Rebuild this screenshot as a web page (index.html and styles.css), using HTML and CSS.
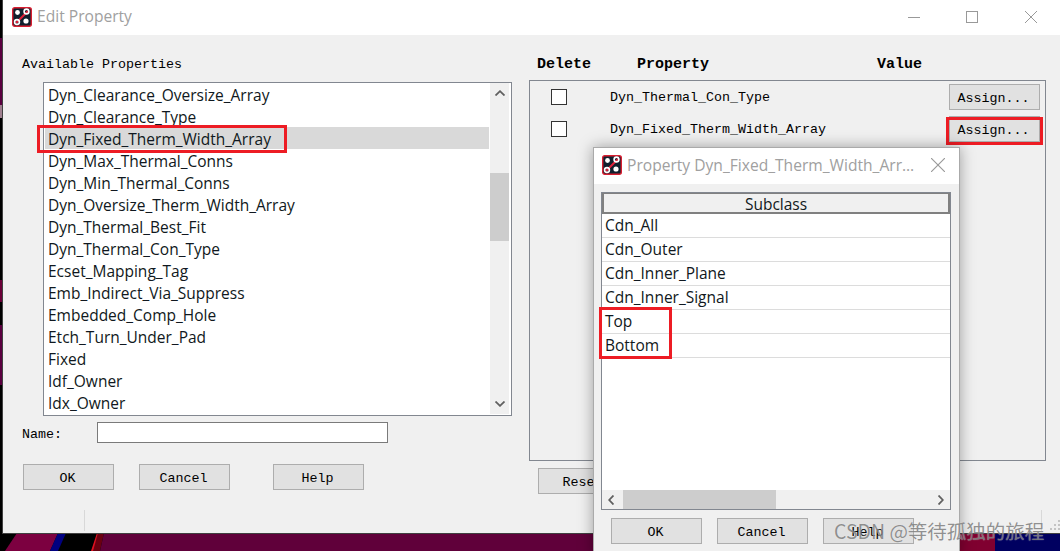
FILE: index.html
```html
<!DOCTYPE html>
<html lang="en">
<head>
<meta charset="utf-8">
<title>Edit Property</title>
<link rel="stylesheet" href="styles.css">
</head>
<body>
<div class="desktop">
  <svg class="wallpaper" width="1060" height="551" viewBox="0 0 1060 551" aria-hidden="true">
    <rect width="1060" height="551" fill="#000"/>
    <rect x="0" y="38" width="3" height="67" fill="#5a0040"/>
    <rect x="0" y="105" width="3" height="13" fill="#a08090"/>
    <rect x="0" y="280" width="3" height="22" fill="#6a0038"/>
    <rect x="0" y="325" width="3" height="60" fill="#5a0040"/>
    <polygon points="17,533 58,533 50,551 5,551" fill="#7c0040"/>
    <polygon points="58,533 66,533 58,551 50,551" fill="#000080"/>
    <polygon points="98,533 104,533 100,551 92,551" fill="#6a0010"/>
    <polygon points="97,533 98,533 93,551 91,551" fill="#e01020"/>
    <polygon points="104,533 600,533 600,551 100,551" fill="#60003a"/>
    <rect x="950" y="533" width="45" height="18" fill="#800030"/>
    <rect x="995" y="533" width="65" height="18" fill="#000060"/>
  </svg>

  <section class="window main-window">
    <header class="titlebar">
      <svg class="app-icon" viewBox="0 0 20 20" aria-hidden="true">
        <rect x="0.7" y="0.7" width="18.6" height="18.6" rx="2" fill="#10202e" stroke="#d81e30" stroke-width="1.4"/>
        <path d="M4 16 16 4" stroke="#e0203a" stroke-width="2"/>
        <circle cx="5.5" cy="5.5" r="2.4" fill="#fff"/>
        <circle cx="14.5" cy="4.5" r="2.4" fill="none" stroke="#fff" stroke-width="1.6"/>
        <circle cx="5" cy="15" r="2.4" fill="none" stroke="#fff" stroke-width="1.6"/>
        <circle cx="14" cy="14" r="2.6" fill="#fff"/>
      </svg>
      <span class="title-text">Edit Property</span>
      <div class="win-controls">
        <svg class="win-btn win-min" viewBox="0 0 12 12" aria-hidden="true"><path d="M0 6.5H12" stroke="#999" fill="none"/></svg>
        <svg class="win-btn" viewBox="0 0 12 12" aria-hidden="true"><rect x="0.5" y="0.5" width="11" height="11" stroke="#999" fill="none"/></svg>
        <svg class="win-btn" viewBox="0 0 12 12" aria-hidden="true"><path d="M0 0 12 12M12 0 0 12" stroke="#999" fill="none"/></svg>
      </div>
    </header>

    <div class="main-body">
      <div class="left-col">
        <div class="mono avail-label">Available Properties</div>
        <div class="listbox">
          <ul class="items">
            <li>Dyn_Clearance_Oversize_Array</li>
            <li>Dyn_Clearance_Type</li>
            <li class="selected">Dyn_Fixed_Therm_Width_Array</li>
            <li>Dyn_Max_Thermal_Conns</li>
            <li>Dyn_Min_Thermal_Conns</li>
            <li>Dyn_Oversize_Therm_Width_Array</li>
            <li>Dyn_Thermal_Best_Fit</li>
            <li>Dyn_Thermal_Con_Type</li>
            <li>Ecset_Mapping_Tag</li>
            <li>Emb_Indirect_Via_Suppress</li>
            <li>Embedded_Comp_Hole</li>
            <li>Etch_Turn_Under_Pad</li>
            <li>Fixed</li>
            <li>Idf_Owner</li>
            <li>Idx_Owner</li>
          </ul>
          <div class="vscroll">
            <svg class="arrow" viewBox="0 0 10 6" aria-hidden="true"><path d="M0.5 5.5 5 1.2 9.5 5.5" fill="none" stroke="#606060" stroke-width="1.8"/></svg>
            <div class="vtrack"><div class="vthumb"></div></div>
            <svg class="arrow" viewBox="0 0 10 6" aria-hidden="true"><path d="M0.5 0.5 5 4.8 9.5 0.5" fill="none" stroke="#606060" stroke-width="1.8"/></svg>
          </div>
        </div>
        <div class="name-row">
          <label class="mono name-label">Name:</label>
          <div class="name-input"></div>
        </div>
        <div class="button-row">
          <button class="mono btn btn-ok">OK</button>
          <button class="mono btn btn-cancel">Cancel</button>
          <button class="mono btn btn-help">Help</button>
        </div>
      </div>

      <div class="right-col">
        <div class="mono col-heads">
          <span>Delete</span>
          <span>Property</span>
          <span>Value</span>
        </div>
        <div class="prop-panel">
          <div class="prop-row">
            <span class="check"></span>
            <span class="mono prop-name">Dyn_Thermal_Con_Type</span>
            <button class="mono btn">Assign...</button>
          </div>
          <div class="prop-row">
            <span class="check"></span>
            <span class="mono prop-name">Dyn_Fixed_Therm_Width_Array</span>
            <button class="mono btn">Assign...</button>
          </div>
        </div>
        <button class="mono btn btn-reset">Reset</button>
      </div>
    </div>
    <div class="footer-rule footer-rule-left"></div>
    <div class="footer-rule footer-rule-right"></div>
    <svg class="grip" width="10" height="11" viewBox="0 0 10 11" aria-hidden="true">
      <path d="M8 0h2v2H8zM4 4h2v2H4zM8 4h2v2H8zM0 8h2v2H0zM4 8h2v2H4zM8 8h2v2H8z" fill="#c4c4c4"/>
    </svg>
  </section>

  <div class="mark mark-selected"></div>
  <div class="mark mark-assign"></div>

  <section class="window popup">
    <header class="popup-title">
      <svg class="app-icon" viewBox="0 0 20 20" aria-hidden="true">
        <rect x="0.7" y="0.7" width="18.6" height="18.6" rx="2" fill="#10202e" stroke="#d81e30" stroke-width="1.4"/>
        <path d="M4 16 16 4" stroke="#e0203a" stroke-width="2"/>
        <circle cx="5.5" cy="5.5" r="2.4" fill="#fff"/>
        <circle cx="14.5" cy="4.5" r="2.4" fill="none" stroke="#fff" stroke-width="1.6"/>
        <circle cx="5" cy="15" r="2.4" fill="none" stroke="#fff" stroke-width="1.6"/>
        <circle cx="14" cy="14" r="2.6" fill="#fff"/>
      </svg>
      <span class="popup-title-text">Property Dyn_Fixed_Therm_Width_Array</span>
      <svg class="popup-close" viewBox="0 0 12 12" aria-hidden="true"><path d="M0 0 12 12M12 0 0 12" stroke="#999" fill="none"/></svg>
    </header>
    <div class="popup-body">
      <div class="table">
        <div class="table-head">Subclass</div>
        <div class="table-rows">
          <div class="table-row">Cdn_All</div>
          <div class="table-row">Cdn_Outer</div>
          <div class="table-row">Cdn_Inner_Plane</div>
          <div class="table-row">Cdn_Inner_Signal</div>
          <div class="table-row">Top</div>
          <div class="table-row">Bottom</div>
        </div>
        <div class="hscroll">
          <svg class="harrow" viewBox="0 0 6 10" aria-hidden="true"><path d="M5.5 0.5 1.2 5 5.5 9.5" fill="none" stroke="#606060" stroke-width="1.8"/></svg>
          <div class="htrack"><div class="hthumb"></div></div>
          <svg class="harrow" viewBox="0 0 6 10" aria-hidden="true"><path d="M0.5 0.5 4.8 5 0.5 9.5" fill="none" stroke="#606060" stroke-width="1.8"/></svg>
        </div>
      </div>
      <div class="popup-buttons">
        <button class="mono btn">OK</button>
        <button class="mono btn">Cancel</button>
        <button class="mono btn">Help</button>
      </div>
    </div>
  </section>

  <div class="mark mark-rows"></div>
  <div class="watermark">CSDN @等待孤独的旅程</div>
</div>
</body>
</html>
```
FILE: styles.css
```css
* { box-sizing: border-box; }
html, body { margin: 0; padding: 0; }
body { width: 1060px; height: 551px; overflow: hidden; background: #000; }
.desktop { position: relative; width: 1060px; height: 551px; overflow: hidden; font-family: "Open Sans", "Noto Sans", sans-serif; }
.wallpaper { position: absolute; left: 0; top: 0; display: block; }
.window { position: absolute; background: #f0f0f0; }
.mono { font-family: "Liberation Mono", monospace; font-size: 13.33px; color: #000; }

.main-window { left: 2px; top: 0; width: 1058px; height: 534px; border-left: 1px solid #404040; border-bottom: 1px solid #404040; }
.titlebar { display: flex; align-items: center; height: 35px; background: #fff; padding: 0 0 1px 9px; }
.app-icon { width: 20px; height: 20px; flex: none; }
.title-text { margin: 0 0 3px 5px; font-size: 15.6px; color: #a0a0a0; }
.win-controls { display: flex; gap: 47px; margin-left: auto; margin-right: 23px; }
.win-btn { width: 12px; height: 12px; display: block; }
.win-min { margin-right: -1px; }

.main-body { display: flex; }
.left-col { width: 526px; flex: none; padding: 22px 0 0 19px; }
.avail-label { line-height: 16px; height: 16px; }
.listbox { display: flex; width: 469px; height: 334px; margin: 9px 0 0 21px; background: #fff; border: 1px solid #828790; padding: 0 2px 1px 1px; }
.items { list-style: none; margin: 0; padding: 0; width: 444px; flex: none; overflow: hidden; }
.items li { height: 22px; line-height: 22px; padding: 1px 0 0 3px; font-size: 15.5px; color: #101820; white-space: nowrap; }
.items li.selected { background: #d9d9d9; }
.vscroll { width: 19px; flex: none; margin-left: 1px; background: #f0f0f0; display: flex; flex-direction: column; align-items: center; }
.arrow { width: 10px; height: 6px; margin: 7px 0; flex: none; }
.vtrack { flex: 1; width: 100%; padding-top: 70px; }
.vthumb { height: 68px; background: #cdcdcd; }

.name-row { display: flex; align-items: center; height: 21px; margin-top: 6px; }
.name-label { width: 75px; padding-top: 4px; }
.name-input { width: 291px; height: 21px; background: #fff; border: 1px solid #7a7a7a; }

.button-row { display: flex; margin: 21px 0 0 1px; }
.btn { width: 91px; height: 26px; padding: 2px 2px 0 0; background: #e1e1e1; border: 1px solid #adadad; border-radius: 0; text-align: center; }
.btn-cancel { margin-left: 25px; }
.btn-help { margin-left: 43px; }

.right-col { width: 517px; flex: none; padding-top: 22px; }
.col-heads { display: grid; grid-template-columns: 100px 240px auto; padding-left: 8px; height: 16px; line-height: 16px; font-size: 15px; font-weight: bold; }
.prop-panel { height: 381px; margin-top: 7px; border: 1px solid #828790; padding: 3px 5px 0 21px; display: flex; flex-direction: column; gap: 6px; }
.prop-row { display: grid; grid-template-columns: 16px 1fr 91px; column-gap: 43px; align-items: center; height: 26px; }
.prop-name { padding-top: 1px; }
.check { width: 16px; height: 16px; background: #fff; border: 1px solid #333; }
.btn-reset { display: block; margin: 7px 0 0 9px; }

.footer-rule { position: absolute; top: 510px; width: 1px; height: 21px; background: #d8d8d8; }
.footer-rule-left { left: 81px; }
.footer-rule-right { left: 1038px; }
.grip { position: absolute; right: 0; top: 520px; }

.mark { position: absolute; border: 3px solid #ed1c24; }
.mark-selected { left: 37px; top: 125px; width: 250px; height: 28px; }
.mark-assign { left: 946px; top: 117px; width: 97px; height: 28px; }
.mark-rows { left: 599px; top: 307px; width: 73px; height: 52px; }

.popup { left: 593px; top: 147px; width: 367px; height: 410px; border: 1px solid #aaa; box-shadow: 0 0 14px rgba(0,0,0,.35); }
.popup-title { display: flex; align-items: center; height: 36px; background: #fff; padding: 0 0 2px 8px; }
.popup-title-text { width: 290px; margin: 0 0 1px 5px; font-size: 15.6px; color: #a0a0a0; white-space: nowrap; overflow: hidden; text-overflow: ellipsis; }
.popup-close { width: 14px; height: 14px; margin-left: 14px; flex: none; }
.popup-body { padding: 8px 8px 0 7px; }
.table { width: 350px; height: 318px; background: #fff; border: 1px solid #828790; display: flex; flex-direction: column; }
.table-head { box-sizing: content-box; height: 18px; line-height: 20px; text-align: center; font-size: 15.5px; color: #101820; background: #f0f0f0; border: 1px solid #808080; border-bottom-width: 2px; border-left-width: 2px; border-right-width: 2px; }
.table-rows { flex: 1; }
.table-row { height: 24px; line-height: 22px; padding-left: 3px; font-size: 15.5px; color: #101820; border-bottom: 1px solid #dcdcdc; }
.hscroll { height: 19px; background: #f0f0f0; display: flex; align-items: center; padding: 0 6px; flex: none; }
.harrow { width: 6px; height: 10px; flex: none; }
.htrack { flex: 1; height: 100%; padding-left: 9px; }
.hthumb { width: 153px; height: 100%; background: #cdcdcd; }
.popup-buttons { display: flex; gap: 15px; margin: 8px 0 0 10px; }

.watermark { position: absolute; left: 834px; top: 517px; font-family: "Noto Sans CJK SC", sans-serif; font-size: 19.5px; line-height: 28px; color: rgba(110,110,110,.75); text-shadow: 0 0 1px rgba(255,255,255,.6); white-space: nowrap; }
```
